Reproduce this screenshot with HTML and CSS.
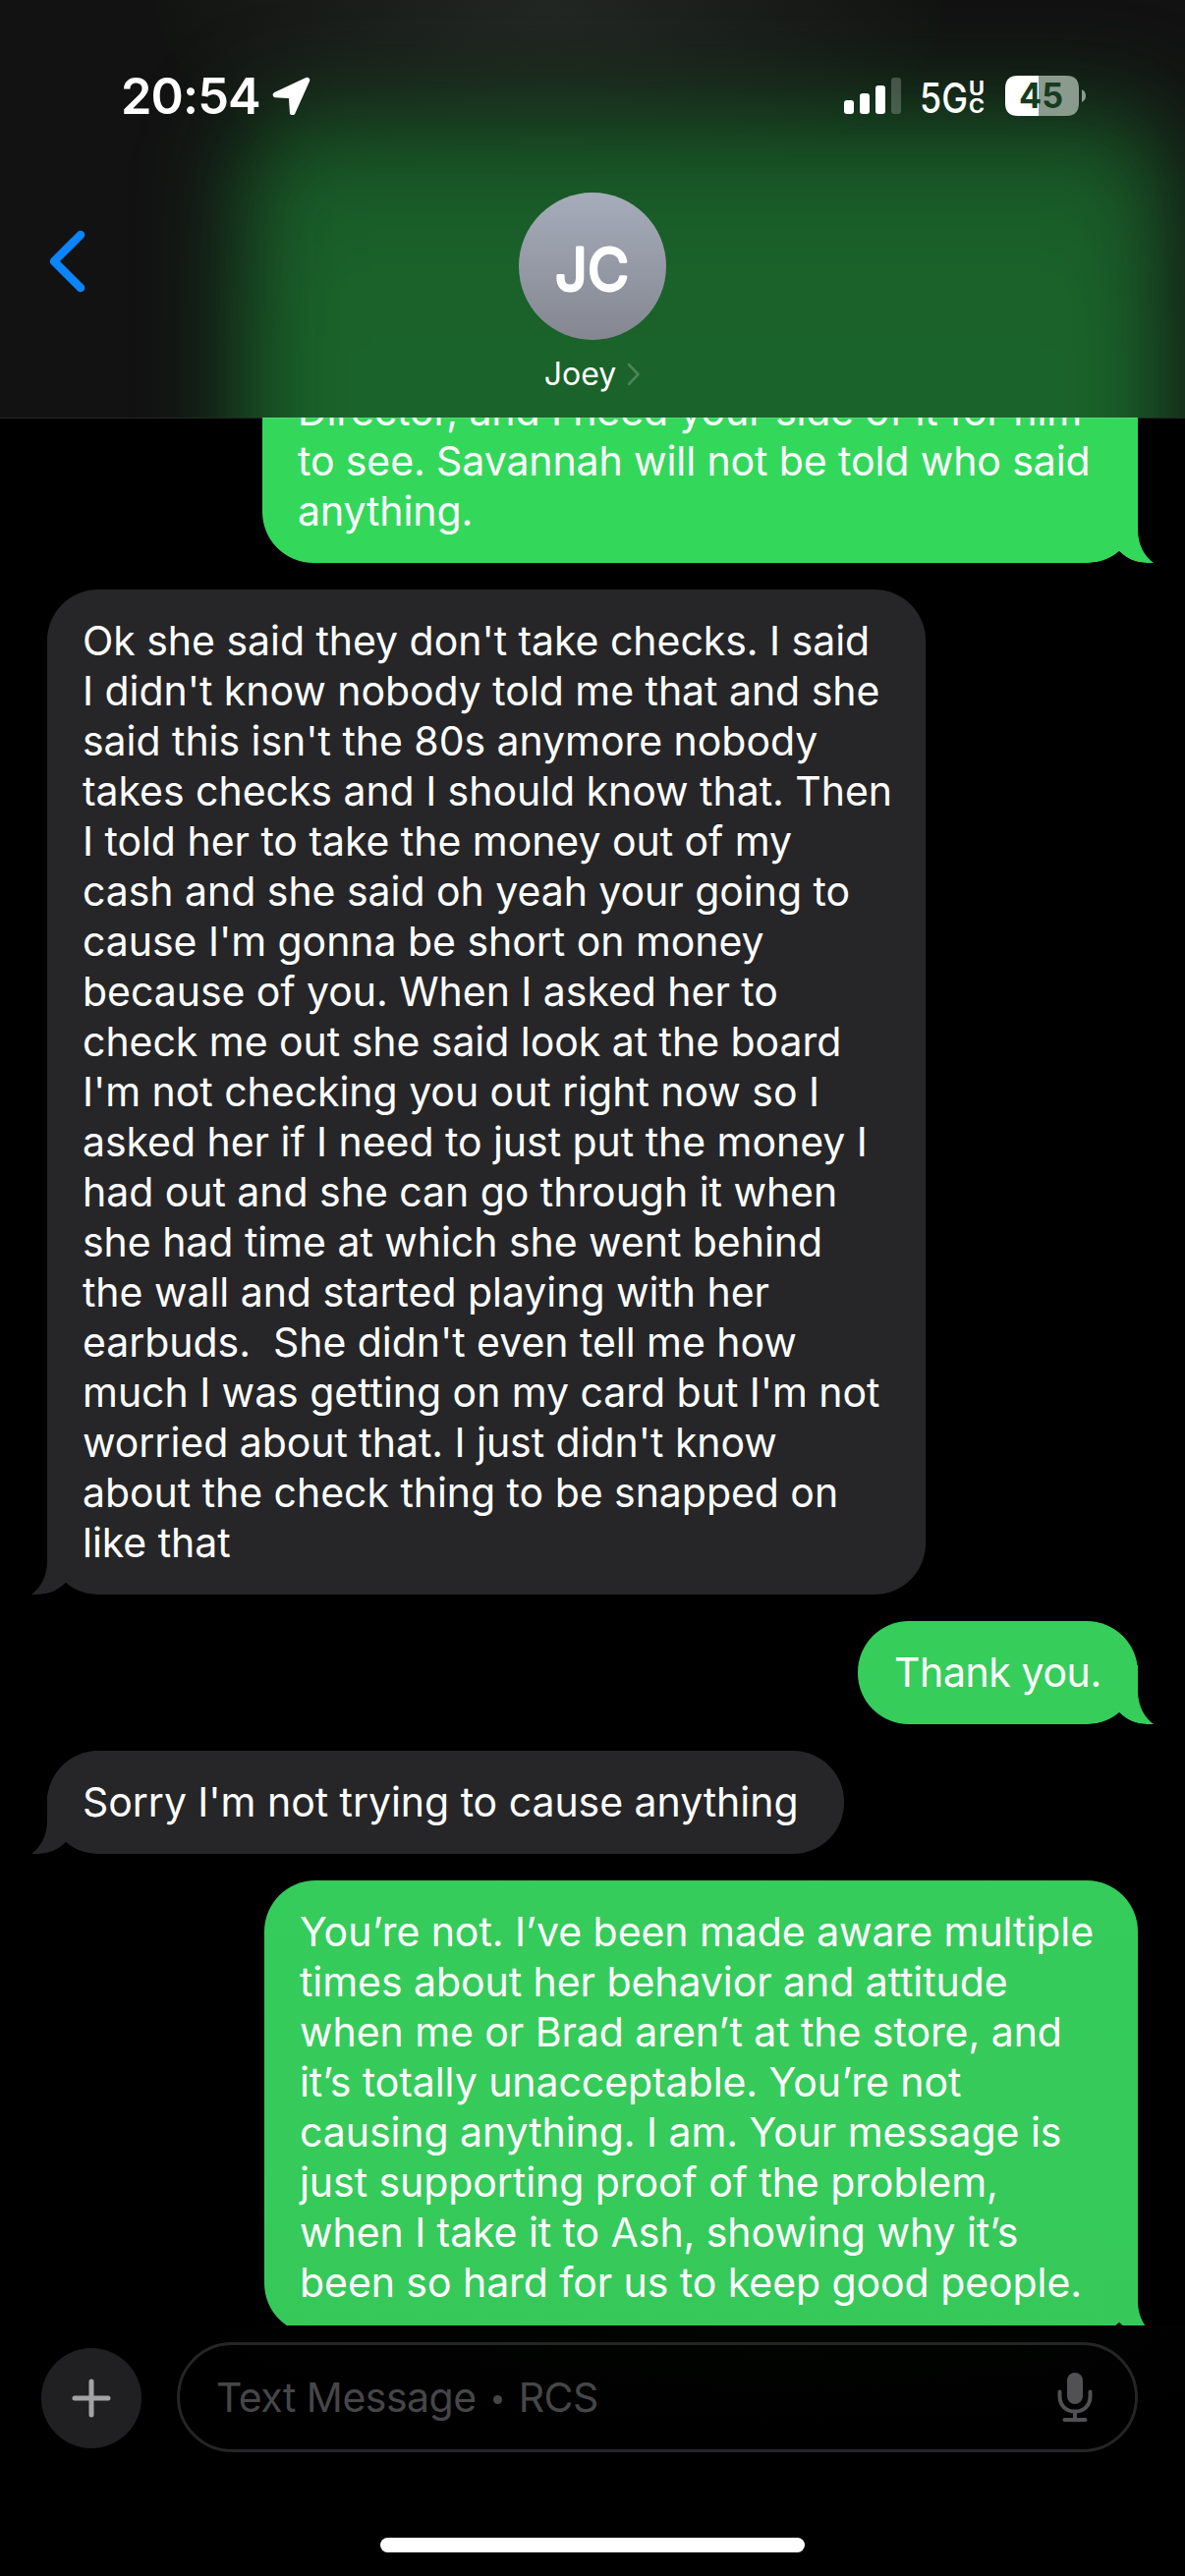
FILE: index.html
```html
<!DOCTYPE html>
<html lang="en">
<head>
<meta charset="utf-8">
<title>Messages</title>
<link rel="stylesheet" href="styles.css">
</head>
<body>
<div class="screen">
  <header class="header">
    <div class="header-glow"></div>
    <div class="status">
      <div class="status-left">
        <span class="clock">20:54</span>
        <svg class="location" width="40" height="40" viewBox="0 0 40 40"><path d="M36.500 4.500L4.500 19.500L20.500 20.500L21.700 37.500Z" fill="#fff" stroke="#fff" stroke-width="5.500" stroke-linejoin="round"/></svg>
      </div>
      <div class="status-right">
        <svg class="signal" width="59" height="38" viewBox="0 0 59 38" fill="#fff">
          <rect x="0" y="23" width="10" height="14" rx="3"/>
          <rect x="16" y="16" width="10" height="21" rx="3"/>
          <rect x="32" y="8" width="10" height="29" rx="3"/>
          <rect x="48" y="0" width="10" height="37" rx="3" opacity=".22"/>
        </svg>
        <svg class="network" width="68" height="42" viewBox="0 0 68 42" fill="#fff">
          <text class="net-main" x="-1" y="37.500" textLength="49" lengthAdjust="spacingAndGlyphs">5G</text>
          <text class="net-sub" x="49" y="20" textLength="16" lengthAdjust="spacingAndGlyphs">U</text>
          <text class="net-sub" x="49" y="37.500" textLength="16" lengthAdjust="spacingAndGlyphs">C</text>
        </svg>
        <svg class="battery" width="83" height="41" viewBox="0 0 83 41">
          <path d="M34 0H62Q75 0 75 13V28Q75 41 62 41H34Z" fill="#8a9b8e"/>
          <path d="M34 0H13Q0 0 0 13V28Q0 41 13 41H34Z" fill="#fff"/>
          <path d="M78 14Q82 16 82 20.500Q82 25 78 27Z" fill="#8a9b8e"/>
          <text class="battery-level" x="14" y="33.300" textLength="45" lengthAdjust="spacingAndGlyphs">45</text>
        </svg>
      </div>
    </div>
    <div class="nav">
      <svg class="back" width="46" height="70" viewBox="0 0 46 70"><path d="M37 8L10 35L37 62" fill="none" stroke="#0a84ff" stroke-width="8.500" stroke-linecap="round" stroke-linejoin="round"/></svg>
      <div class="contact">
        <svg class="avatar" width="150" height="150" viewBox="0 0 150 150">
          <defs><linearGradient id="disc" x2="0" y2="1"><stop stop-color="#a6acba"/><stop offset="1" stop-color="#848791"/></linearGradient></defs>
          <circle cx="75" cy="75" r="75" fill="url(#disc)"/>
          <text class="initials" x="37" y="99.500" textLength="75" lengthAdjust="spacingAndGlyphs">JC</text>
        </svg>
        <div class="contact-name">Joey<svg width="14" height="26" viewBox="0 0 14 26"><path d="M2 3L11.500 13L2 23" fill="none" stroke="#4b8458" stroke-width="2.600" stroke-linecap="round" stroke-linejoin="round"/></svg></div>
      </div>
      <span></span>
    </div>
  </header>

  <main class="thread">
    <div class="bubble sent first">Director, and I need your side of it for him<br>to see. Savannah will not be told who said<br>anything.<svg class="tail" viewBox="0 0 50 60"><path d="M0 0H34V26C34 42 41 53 50 60H44C32 60 23 56 15 48L0 40Z"/><path class="notch" d="M15 48Q3 60-16 60H44C32 60 23 56 15 48Z"/></svg></div>
    <div class="bubble received long">Ok she said they don't take checks. I said<br>I didn't know nobody told me that and she<br>said this isn't the 80s anymore nobody<br>takes checks and I should know that. Then<br>I told her to take the money out of my<br>cash and she said oh yeah your going to<br>cause I'm gonna be short on money<br>because of you. When I asked her to<br>check me out she said look at the board<br>I'm not checking you out right now so I<br>asked her if I need to just put the money I<br>had out and she can go through it when<br>she had time at which she went behind<br>the wall and started playing with her<br>earbuds.&nbsp; She didn't even tell me how<br>much I was getting on my card but I'm not<br>worried about that. I just didn't know<br>about the check thing to be snapped on<br>like that<svg class="tail" viewBox="0 0 50 60"><path d="M0 0H34V26C34 42 41 53 50 60H44C32 60 23 56 15 48L0 40Z"/><path class="notch" d="M15 48Q3 60-16 60H44C32 60 23 56 15 48Z"/></svg></div>
    <div class="bubble sent thanks">Thank you.<svg class="tail" viewBox="0 0 50 60"><path d="M0 0H34V26C34 42 41 53 50 60H44C32 60 23 56 15 48L0 40Z"/><path class="notch" d="M15 48Q3 60-16 60H44C32 60 23 56 15 48Z"/></svg></div>
    <div class="bubble received sorry">Sorry I'm not trying to cause anything<svg class="tail" viewBox="0 0 50 60"><path d="M0 0H34V26C34 42 41 53 50 60H44C32 60 23 56 15 48L0 40Z"/><path class="notch" d="M15 48Q3 60-16 60H44C32 60 23 56 15 48Z"/></svg></div>
    <div class="bubble sent last">You’re not. I’ve been made aware multiple<br>times about her behavior and attitude<br>when me or Brad aren’t at the store, and<br>it’s totally unacceptable. You’re not<br>causing anything. I am. Your message is<br>just supporting proof of the problem,<br>when I take it to Ash, showing why it’s<br>been so hard for us to keep good people.<svg class="tail" viewBox="0 0 50 60"><path d="M0 0H34V26C34 42 41 53 50 60H44C32 60 23 56 15 48L0 40Z"/><path class="notch" d="M15 48Q3 60-16 60H44C32 60 23 56 15 48Z"/></svg></div>
  </main>

  <footer class="footer">
    <div class="composer">
      <div class="plus"><svg width="40" height="40" viewBox="0 0 40 40"><path d="M20 3V37M3 20H37" stroke="#a3a3a5" stroke-width="5" stroke-linecap="round"/></svg></div>
      <div class="field">
        <span class="placeholder">Text Message <i class="dot"></i> RCS</span>
        <svg class="mic" width="36" height="52" viewBox="0 0 36 52"><rect x="10" y="1" width="16" height="32" rx="8" fill="#515153"/><path d="M2.500 20.500V25C2.500 34.500 9 40.500 18 40.500S33.500 34.500 33.500 25V20.500M18 41V48M7.500 49H28.500" fill="none" stroke="#515153" stroke-width="4" stroke-linecap="round"/></svg>
      </div>
    </div>
    <div class="home"></div>
  </footer>
</div>
</body>
</html>
```
FILE: styles.css
```css
* { box-sizing: border-box; }

body {
  margin: 0;
  background: #000;
  color: #fff;
  font-family: Inter, "Liberation Sans", sans-serif;
}

.screen {
  width: 1206px;
  height: 2622px;
  display: flex;
  flex-direction: column;
  overflow: hidden;
}

/* Header */
.header {
  position: relative;
  flex: none;
  height: 425px;
  overflow: hidden;
  background: radial-gradient(ellipse 400px 200px at 560px 0, #232723, #121412 100%, #121212);
}

.header-glow {
  position: absolute;
  left: 246px;
  top: 112px;
  width: 944px;
  height: 600px;
  border-radius: 60px;
  background: linear-gradient(#164f22, #1a602a 20%, #1a632a 40%);
  filter: blur(48px);
}

.status {
  position: relative;
  display: flex;
  justify-content: space-between;
  height: 196px;
  padding: 77px 100px 0 123px;
}

.status-left, .status-right { display: flex; align-items: flex-start; }

.clock {
  width: 153px;
  font-size: 50.5px;
  font-weight: 600;
  line-height: 42px;
  letter-spacing: -.9px;
  white-space: nowrap;
}

.signal { margin: 2px 19px 0 0; }
.network { margin-right: 18px; overflow: visible; }

.net-main { font-size: 42px; font-weight: 500; }
.net-sub { font-size: 19.5px; font-weight: 700; }
.battery-level { font-size: 35px; font-weight: 700; fill: #173b20; }

.nav {
  position: relative;
  display: grid;
  grid-template-columns: 1fr 150px 1fr;
}

.back { margin: 35px 0 0 45px; }

.contact {
  display: flex;
  flex-direction: column;
  align-items: center;
}

.initials {
  font-size: 61px;
  font-weight: 400;
  fill: #fff;
  stroke: #fff;
  stroke-width: 3;
  stroke-linejoin: round;
}

.contact-name {
  display: flex;
  align-items: center;
  gap: 11px;
  margin-top: 15px;
  font-size: 32px;
  line-height: 40px;
}

/* Conversation */
.thread {
  position: relative;
  flex: none;
  height: 1942px;
  padding: 0 48px;
  display: flex;
  flex-direction: column;
  gap: 27px;
  overflow: hidden;
}

.thread::before {
  content: "";
  position: absolute;
  z-index: 1;
  left: 0;
  top: 0;
  width: 100%;
  height: 1px;
  background: rgba(255, 255, 255, .15);
}

.bubble {
  position: relative;
  flex: none;
  padding: 27px 36px;
  border-radius: 52px;
  font-size: 41px;
  line-height: 51px;
  letter-spacing: -.04px;
  white-space: nowrap;
}

.sent { align-self: flex-end; letter-spacing: -.06px; }
.received { align-self: flex-start; background: #262628; fill: #262628; }

.first { width: 891px; margin-top: -59px; letter-spacing: -.1px; background: #33d85b; fill: #33d85b; }
.long { width: 894px; }
.thanks { width: 285px; padding-left: 37px; letter-spacing: -.4px; background: #36cd5b; fill: #36cd5b; }
.sorry { width: 811px; }
.last { width: 889px; background: linear-gradient(#35cc5b, #36c95a); fill: #36c95a; }

.tail {
  position: absolute;
  right: -16px;
  bottom: 0;
  width: 50px;
  height: 60px;
  overflow: visible;
}

.received .tail { right: auto; left: -16px; transform: scaleX(-1); }
.notch { fill: #000; }

/* Message composer */
.footer {
  flex: 1;
  display: flex;
  flex-direction: column;
  align-items: center;
  justify-content: space-between;
  padding: 17px 48px 24px 42px;
  background: radial-gradient(ellipse 600px 100px at 800px 0, #020502, #000);
}

.composer {
  width: 100%;
  display: flex;
  align-items: center;
  gap: 36px;
}

.plus {
  width: 102px;
  height: 102px;
  margin-top: 2px;
  border-radius: 50%;
  background: #202022;
  display: flex;
  align-items: center;
  justify-content: center;
}

.field {
  flex: 1;
  height: 112px;
  display: flex;
  align-items: center;
  justify-content: space-between;
  padding: 0 43px 0 37px;
  border: 3px solid #242526;
  border-radius: 56px;
}

.placeholder {
  color: #464648;
  font-size: 41px;
  letter-spacing: -.5px;
  white-space: nowrap;
}

.dot {
  display: inline-block;
  width: 9px;
  height: 9px;
  margin: 0 6px 8px;
  border-radius: 50%;
  background: #464648;
}

.home {
  width: 432px;
  height: 15px;
  margin-left: 6px;
  border-radius: 8px;
  background: #fff;
}
```
